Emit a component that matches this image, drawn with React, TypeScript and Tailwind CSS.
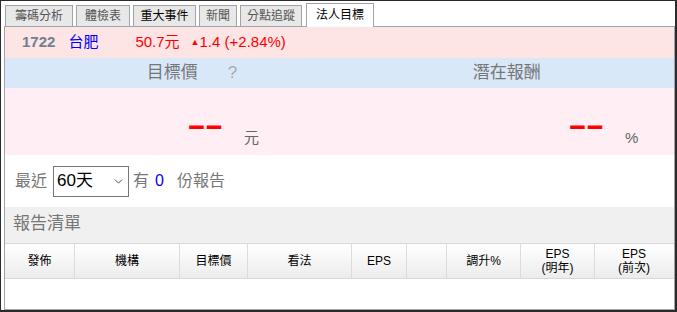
import { ChevronDown } from 'lucide-react';

const font = 'font-["Liberation_Sans","Noto_Sans_CJK_TC",sans-serif]';

const tabs = [
  { label: '籌碼分析', w: 'w-[68px]', tone: 'text-[#555]' },
  { label: '體檢表', w: 'w-[54px]', tone: 'text-[#555]' },
  { label: '重大事件', w: 'w-[63px]', tone: 'text-black' },
  { label: '新聞', w: 'w-[38px]', tone: 'text-[#555]' },
  { label: '分點追蹤', w: 'w-[62px]', tone: 'text-[#555]' },
];

const columns = [
  ['發佈'],
  ['機構'],
  ['目標價'],
  ['看法'],
  ['EPS'],
  [''],
  ['調升%'],
  ['EPS', '(明年)'],
  ['EPS', '(前次)'],
];

function Dashes() {
  return (
    <span className="relative inline-block h-[30px] w-[34px]">
      <span className="absolute left-0 top-0 origin-left scale-x-[1.9] text-[30px] font-bold leading-[30px] tracking-[-0.8px] text-[#ff0000]">
        --
      </span>
    </span>
  );
}

export default function App() {
  return (
    <div
      className={`${font} flex h-[312px] w-[677px] flex-col border-b-2 border-l border-r-2 border-t border-[#2b2b2b] bg-white`}
    >
      {/* tabs */}
      <div className="flex h-[25px] items-end gap-[3px] pl-[4px]">
        {tabs.map(({ label, w, tone }) => (
          <div
            key={label}
            className={`${w} ${tone} flex h-[21px] items-center justify-center border border-b-0 border-[#a3a3a3] bg-[#e8e8e8] text-[12px]`}
          >
            {label}
          </div>
        ))}
        <div className="relative z-10 -mb-px ml-[1px] flex h-[24px] w-[68px] items-center justify-center border border-b-0 border-[#a3a3a3] bg-white pb-[1px] text-[12px] text-black">
          法人目標
        </div>
      </div>

      <div className="ml-[3px] flex flex-1 flex-col border border-[#a3a3ab] bg-white">
        {/* quote */}
        <div className="flex h-[31px] items-center bg-[#fde4e5] pl-[17px] text-[15px]">
          <span className="font-bold text-[#708090]">1722</span>
          <span className="ml-[13px] text-[#0000ff]">台肥</span>
          <span className="ml-[37px] text-[#ff0000]">50.7元</span>
          <span className="ml-[11px] text-[#ff0000]">
            <span className="relative top-[-2px] text-[9px]">▲</span>1.4 (+2.84%)
          </span>
        </div>

        {/* labels */}
        <div className="grid h-[30px] grid-cols-2 items-center bg-[#d9e8f8] text-[17px] text-[#777]">
          <div className="flex justify-center">
            <span className="relative">
              目標價
              <span className="absolute left-full top-0 ml-[30px] text-[#aaa]">?</span>
            </span>
          </div>
          <div className="flex justify-center">潛在報酬</div>
        </div>

        {/* values */}
        <div className="flex h-[67px] items-start bg-[#ffeef3] text-[15px] text-[#666]">
          <div className="ml-[182px] mt-[22px]">
            <Dashes />
          </div>
          <span className="ml-[23px] mt-[39px]">元</span>
          <div className="ml-[309px] mt-[22px]">
            <Dashes />
          </div>
          <span className="ml-[23px] mt-[39px]">%</span>
        </div>

        {/* filter */}
        <div className="flex h-[52px] items-center pl-[10px] text-[16px] text-[#777]">
          <span>最近</span>
          <div className="relative ml-[6px] h-[31px] w-[76px]">
            <select
              defaultValue="60"
              className="h-full w-full appearance-none border border-[#767676] bg-white pl-[3px] text-[17px] text-black outline-none"
            >
              <option value="60">60天</option>
            </select>
            <ChevronDown
              size={13}
              strokeWidth={1.6}
              className="pointer-events-none absolute right-[4px] top-[9px] text-[#333]"
            />
          </div>
          <span className="ml-[4px]">有</span>
          <span className="ml-[6px] text-[#0000ff]">0</span>
          <span className="ml-[13px]">份報告</span>
        </div>

        {/* list title */}
        <div className="flex h-[36px] items-center bg-[#f0f0f0] pb-[3px] pl-[8px] text-[17px] text-[#777]">
          報告清單
        </div>

        {/* table header */}
        <div className="grid h-[36px] grid-cols-[69px_105px_68px_104px_55px_40px_74px_74px_79px] border-y border-[#d8d8d8] bg-gradient-to-b from-white to-[#ececec] text-[12px] leading-[14px] text-black">
          {columns.map((lines, i) => (
            <div
              key={i}
              className={`flex flex-col items-center justify-center ${i > 0 ? 'border-l border-[#dcdcdc]' : ''}`}
            >
              {lines.map((line) => (
                <span key={line}>{line}</span>
              ))}
            </div>
          ))}
        </div>

        <div className="flex-1" />
      </div>
    </div>
  );
}
